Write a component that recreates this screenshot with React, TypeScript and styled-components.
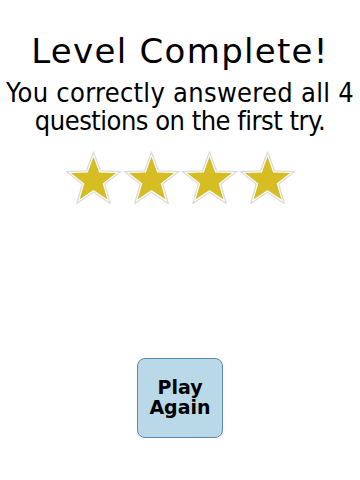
import React from "react";
import styled, { createGlobalStyle } from "styled-components";

const Global = createGlobalStyle`
  html, body { margin: 0; padding: 0; background: #ffffff; }
  body { font-family: "DejaVu Sans", "Liberation Sans", sans-serif; color: #000; }
`;

const Page = styled.div`
  width: 360px;
  height: 480px;
  display: flex;
  flex-direction: column;
  align-items: center;
`;

const Title = styled.h1`
  margin: 31px 0 0;
  font-size: 34px;
  font-weight: 400;
  line-height: 40px;
  letter-spacing: 1.3px;
  white-space: nowrap;
`;

const Subtitle = styled.div`
  margin: 8px 0 0;
  display: flex;
  flex-direction: column;
  align-items: center;
  font-family: "DejaVu Sans Condensed", "DejaVu Sans", sans-serif;
  font-size: 27px;
  font-weight: 400;
  line-height: 28px;
  white-space: nowrap;
`;

const SubLine = styled.span<{ $spacing: number }>`
  display: block;
  letter-spacing: ${(p) => p.$spacing}px;
`;

const Stars = styled.div`
  margin-top: 15px;
  display: flex;
  gap: 1px;
`;

const StarSvg = styled.svg`
  width: 57px;
  height: 57px;
  display: block;
`;

const Spacer = styled.div`
  flex: 1;
`;

const Button = styled.button`
  margin-bottom: 42px;
  width: 86px;
  height: 80px;
  border: 1.5px solid #5a8ab2;
  border-radius: 8px;
  background: #b9d9e9;
  font-family: "DejaVu Sans", "Liberation Sans", sans-serif;
  font-weight: 700;
  font-size: 19px;
  line-height: 20px;
  color: #000;
  padding: 0 0 2px;
  display: flex;
  align-items: center;
  justify-content: center;
  text-align: center;
`;

const starPoints = (cx: number, cy: number, R: number, r: number) => {
  const pts: string[] = [];
  for (let i = 0; i < 10; i++) {
    const rad = i % 2 === 0 ? R : r;
    const a = (Math.PI / 5) * i - Math.PI / 2;
    pts.push(`${(cx + rad * Math.cos(a)).toFixed(2)},${(cy + rad * Math.sin(a)).toFixed(2)}`);
  }
  return pts.join(" ");
};

const Star = () => (
  <StarSvg viewBox="0 0 60 60">
    <polygon
      points={starPoints(30, 32, 30, 12.5)}
      fill="#ffffff"
      stroke="#dcdcdc"
      strokeWidth="1.4"
      strokeLinejoin="round"
    />
    <polygon points={starPoints(30, 32, 25, 10.2)} fill="#d6bd24" />
  </StarSvg>
);

export default function App() {
  return (
    <>
      <Global />
      <Page>
        <Title>Level Complete!</Title>
        <Subtitle>
          <SubLine $spacing={0.3}>You correctly answered all 4</SubLine>
          <SubLine $spacing={-0.5}>questions on the first try.</SubLine>
        </Subtitle>
        <Stars>
          <Star />
          <Star />
          <Star />
          <Star />
        </Stars>
        <Spacer />
        <Button>
          Play
          <br />
          Again
        </Button>
      </Page>
    </>
  );
}
